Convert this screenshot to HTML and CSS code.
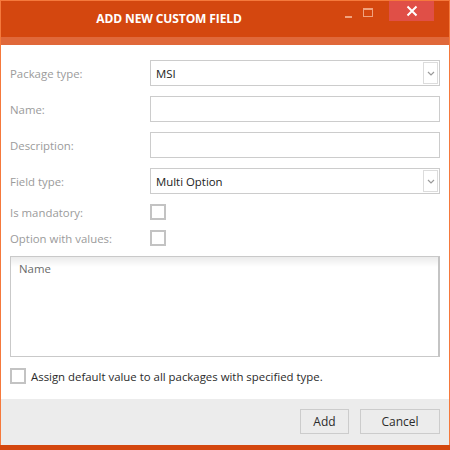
FILE: index.html
```html
<!DOCTYPE html>
<html>
<head>
<meta charset="utf-8">
<link rel="stylesheet" href="styles.css">
</head>
<body>
<div class="window">
  <div class="titlebar">
    <div class="title">ADD NEW CUSTOM FIELD</div>
    <div class="controls">
      <span class="btn-min"></span>
      <span class="btn-max"></span>
      <span class="btn-close">
        <svg width="12" height="12" viewBox="0 0 12 12"><path d="M1.5 1.5 L10.5 10.5 M10.5 1.5 L1.5 10.5" stroke="#fff" stroke-width="2" fill="none"/></svg>
      </span>
    </div>
  </div>
  <div class="strip"></div>
  <div class="content">
    <div class="form">
      <label class="lbl">Package type:</label>
      <div class="field select"><span>MSI</span><span class="arrow"><svg width="8" height="5" viewBox="0 0 8 5"><path d="M1 1 L4 4 L7 1" stroke="#9a9a9a" stroke-width="1.2" fill="none"/></svg></span></div>
      <label class="lbl">Name:</label>
      <div class="field"></div>
      <label class="lbl">Description:</label>
      <div class="field"></div>
      <label class="lbl">Field type:</label>
      <div class="field select"><span>Multi Option</span><span class="arrow"><svg width="8" height="5" viewBox="0 0 8 5"><path d="M1 1 L4 4 L7 1" stroke="#9a9a9a" stroke-width="1.2" fill="none"/></svg></span></div>
      <label class="lbl">Is mandatory:</label>
      <div class="check-cell"><span class="check"></span></div>
      <label class="lbl">Option with values:</label>
      <div class="check-cell"><span class="check"></span></div>
    </div>
    <div class="listbox">
      <div class="list-head">Name</div>
    </div>
    <div class="assign">
      <span class="check"></span>
      <span class="assign-text">Assign default value to all packages with specified type.</span>
    </div>
  </div>
  <div class="footer">
    <button class="btn btn-add">Add</button>
    <button class="btn btn-cancel">Cancel</button>
  </div>
  <div class="bottom"></div>
</div>
</body>
</html>
```

FILE: styles.css
```css
html, body {
  margin: 0;
  padding: 0;
  background: #ffffff;
}
body {
  font-family: "Open Sans", "Noto Sans", sans-serif;
  font-size: 11.4px;
}
.window {
  box-sizing: border-box;
  width: 450px;
  height: 450px;
  border: 1px solid #f5793c;
  border-bottom: none;
  display: flex;
  flex-direction: column;
}
.titlebar {
  height: 36px;
  background: #d4470f;
  display: flex;
  align-items: flex-start;
}
.title {
  flex: 1;
  text-align: center;
  color: #ffffff;
  font-weight: bold;
  font-size: 12px;
  line-height: 35px;
  letter-spacing: -0.1px;
}
.controls {
  width: 112px;
  display: flex;
  align-items: flex-start;
  height: 20px;
}
.btn-min {
  width: 7px;
  height: 2px;
  background: #f0a27e;
  margin: 15px 0 0 8px;
}
.btn-max {
  box-sizing: border-box;
  width: 10px;
  height: 9px;
  border: 1px solid #f0a27e;
  border-top-width: 2px;
  margin: 7px 0 0 11px;
}
.btn-close {
  width: 45px;
  height: 20px;
  background: #e04f47;
  margin-left: 16px;
  display: flex;
  align-items: center;
  justify-content: center;
}
.strip {
  height: 8px;
  background: #e0683a;
}
.content {
  flex: 1;
  padding: 15px 9px 0 9px;
  display: flex;
  flex-direction: column;
  gap: 10px;
}
.form {
  display: grid;
  grid-template-columns: 140px 1fr;
  grid-template-rows: 26px 26px 26px 26px 16px 16px;
  row-gap: 10px;
}
.form .lbl {
  color: #9b9b9b;
  display: flex;
  align-items: center;
}
.field {
  box-sizing: border-box;
  border: 1px solid #cccccc;
  height: 26px;
  background: #fff;
}
.select {
  display: flex;
  align-items: center;
  justify-content: space-between;
  padding: 1px 1px 1px 5px;
  color: #222;
}
.select .arrow {
  box-sizing: border-box;
  width: 15px;
  height: 22px;
  border: 1px solid #dcdcdc;
  display: flex;
  align-items: center;
  justify-content: center;
}
.check-cell {
  display: flex;
  align-items: center;
}
.check {
  box-sizing: border-box;
  display: inline-block;
  flex: none;
  width: 16px;
  height: 16px;
  border: 2px solid #c3c3c3;
  background: #fff;
}
.listbox {
  box-sizing: border-box;
  height: 101px;
  border: 1px solid #c9c9c9;
  border-right: 2px solid #c4c4c4;
}
.list-head {
  height: 24px;
  padding-left: 8px;
  line-height: 24px;
  color: #6a6a6a;
  background: linear-gradient(#ebebeb, #ffffff 10px);
}
.assign {
  display: flex;
  align-items: center;
  gap: 5px;
  margin-top: 1px;
}
.assign-text {
  color: #2b2b2b;
}
.footer {
  height: 46px;
  background: #ececec;
  display: flex;
  justify-content: flex-end;
  align-items: flex-start;
  padding: 10px 9px 0 0;
  box-sizing: border-box;
  gap: 11px;
}
.btn {
  box-sizing: border-box;
  height: 25px;
  border: 1px solid #cccccc;
  background: #ececec;
  font-family: inherit;
  font-size: 12px;
  color: #2b2b2b;
  padding: 0;
}
.btn-add { width: 49px; }
.btn-cancel { width: 80px; }
.bottom {
  height: 5px;
  background: #d4470f;
  margin: 0 -1px;
}
```
